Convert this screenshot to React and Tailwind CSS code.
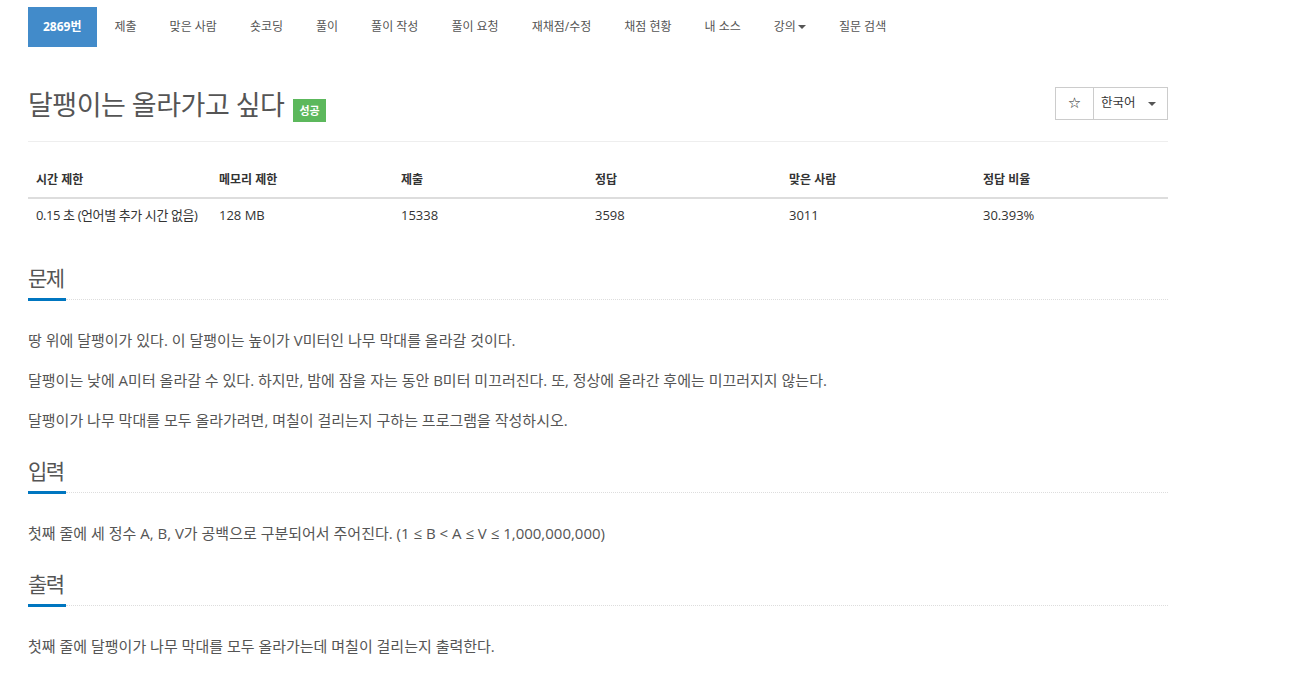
import React from 'react';

const FONT = { fontFamily: '"Open Sans", "Noto Sans CJK KR", sans-serif' };

const navItems = [
  '제출',
  '맞은 사람',
  '숏코딩',
  '풀이',
  '풀이 작성',
  '풀이 요청',
  '재채점/수정',
  '채점 현황',
  '내 소스',
];

const stats = [
  { label: '시간 제한', value: '0.15 초 (언어별 추가 시간 없음)', ko: true },
  { label: '메모리 제한', value: '128 MB' },
  { label: '제출', value: '15338' },
  { label: '정답', value: '3598' },
  { label: '맞은 사람', value: '3011' },
  { label: '정답 비율', value: '30.393%' },
];

const Caret = () => (
  <span className="inline-block w-0 h-0 border-t-[4px] border-t-[#555] border-x-[4px] border-x-transparent align-middle" />
);

const Headline = ({ children }) => (
  <div className="flex items-end">
    <div className="w-[38px] shrink-0">
      <h2 className="text-[21px] leading-[24px] tracking-[-1.5px] text-[#555] pb-[8px] whitespace-nowrap">
        {children}
      </h2>
      <div className="h-[3px] bg-[#0076c0]" />
    </div>
    <div className="flex-1 border-b border-dotted border-[#ddd] mb-[1px]" />
  </div>
);

const Section = ({ title, paragraphs }) => (
  <section className="flex flex-col gap-[27px]">
    <Headline>{title}</Headline>
    <div className="flex flex-col gap-[16px] text-[15px] leading-[24px] text-[#555]">
      {paragraphs.map((p, i) => (
        <p key={i}>{p}</p>
      ))}
    </div>
  </section>
);

export default function App() {
  return (
    <div className="min-h-screen bg-white" style={FONT}>
      <div className="w-[1140px] ml-[28px]">
        {/* Problem menu */}
        <ul className="flex gap-[3px] pt-[7px] text-[12px] text-[#555]">
          <li className="h-[40px] leading-[40px] px-[15px] bg-[#428bca] text-white font-bold">2869번</li>
          {navItems.map((item) => (
            <li key={item} className="h-[40px] leading-[40px] px-[15px] whitespace-nowrap">{item}</li>
          ))}
          <li className="h-[40px] leading-[40px] px-[15px] whitespace-nowrap flex items-center gap-[2px]">
            <span>강의</span>
            <Caret />
          </li>
          <li className="h-[40px] leading-[40px] px-[15px] whitespace-nowrap">질문 검색</li>
        </ul>

        {/* Title */}
        <div className="mt-[40px] pb-[18px] border-b border-[#eee] flex justify-between items-start">
          <div className="flex items-start">
            <h1 className="text-[27px] leading-[36px] tracking-[-0.5px] text-[#555]">달팽이는 올라가고 싶다</h1>
            <span className="ml-[9px] mt-[12px] h-[23px] px-[6px] leading-[23px] bg-[#5cb85c] text-white text-[11px] font-bold whitespace-nowrap">
              성공
            </span>
          </div>
          <div className="flex h-[33px] border border-[#ccc] text-[#333]">
            <button
              className="w-[38px] flex items-center justify-center text-[15px] text-[#222] border-r border-[#ccc]"
              style={{ fontFamily: '"DejaVu Sans", sans-serif' }}
            >
              ☆
            </button>
            <button className="w-[73px] flex items-center pl-[7px] gap-[12px] text-[12.5px]">
              <span>한국어</span>
              <Caret />
            </button>
          </div>
        </div>

        {/* Problem info table */}
        <div className="mt-[20px] grid grid-cols-[183px_182px_194px_194px_194px_1fr]">
          {stats.map((s) => (
            <div key={s.label} className="px-[8px] pt-[8px] pb-[7px] text-[12px] leading-[20px] font-bold text-[#333] border-b-2 border-[#ddd] whitespace-nowrap">
              {s.label}
            </div>
          ))}
          {stats.map((s) => (
            <div
              key={s.label + '-v'}
              className={`px-[8px] pt-[6px] pb-[8px] text-[13px] leading-[20px] text-[#333] whitespace-nowrap ${s.ko ? 'tracking-[-0.4px]' : ''}`}
            >
              {s.value}
            </div>
          ))}
        </div>

        {/* Problem body */}
        <div className="mt-[33px] flex flex-col gap-[27px] pb-[40px]">
          <Section
            title="문제"
            paragraphs={[
              '땅 위에 달팽이가 있다. 이 달팽이는 높이가 V미터인 나무 막대를 올라갈 것이다.',
              '달팽이는 낮에 A미터 올라갈 수 있다. 하지만, 밤에 잠을 자는 동안 B미터 미끄러진다. 또, 정상에 올라간 후에는 미끄러지지 않는다.',
              '달팽이가 나무 막대를 모두 올라가려면, 며칠이 걸리는지 구하는 프로그램을 작성하시오.',
            ]}
          />
          <Section
            title="입력"
            paragraphs={['첫째 줄에 세 정수 A, B, V가 공백으로 구분되어서 주어진다. (1 ≤ B < A ≤ V ≤ 1,000,000,000)']}
          />
          <Section
            title="출력"
            paragraphs={['첫째 줄에 달팽이가 나무 막대를 모두 올라가는데 며칠이 걸리는지 출력한다.']}
          />
        </div>
      </div>
    </div>
  );
}
